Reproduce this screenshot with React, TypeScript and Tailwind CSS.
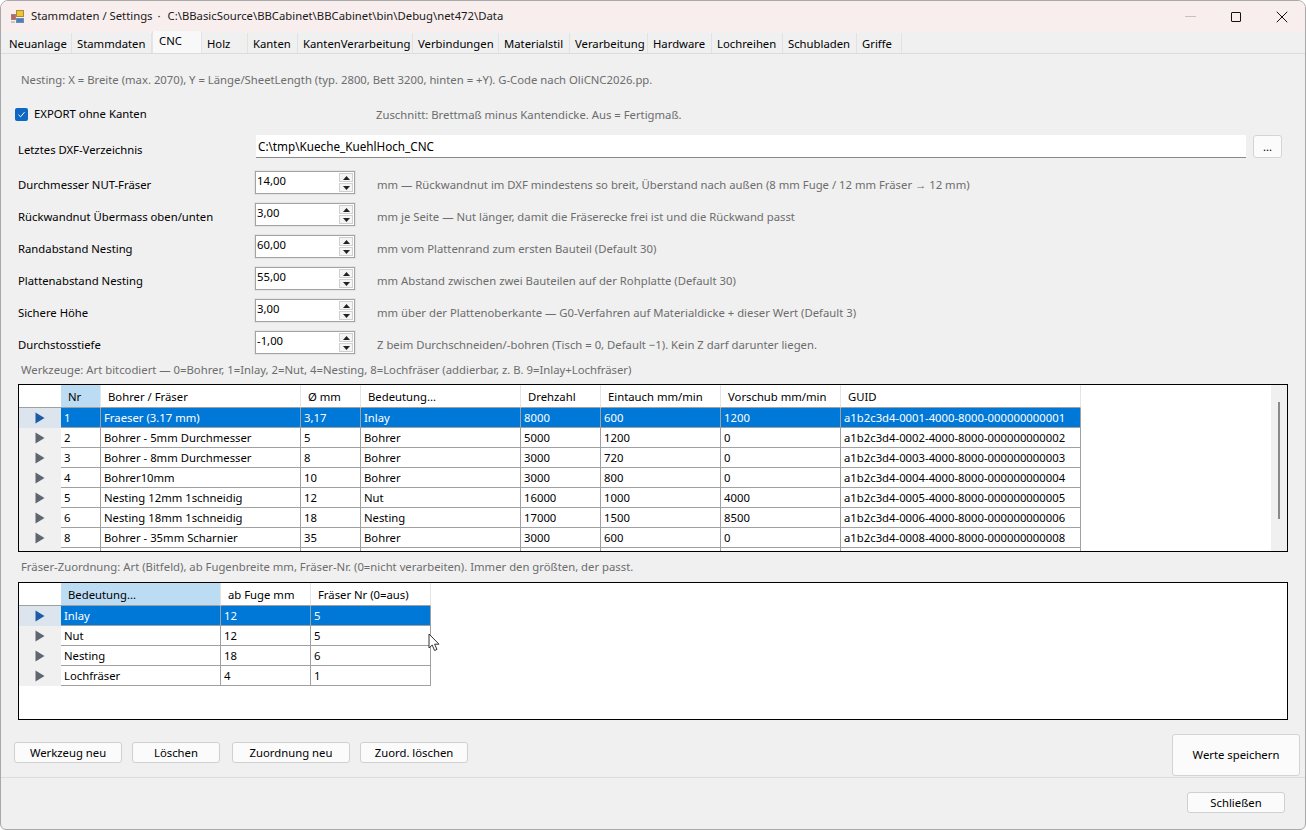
import { X } from "lucide-react";

const tabs = [
  { label: "Neuanlage", width: "w-[68px]" },
  { label: "Stammdaten", width: "w-[80px]" },
  { label: "CNC", width: "w-[50px]", active: true },
  { label: "Holz", width: "w-[46px]" },
  { label: "Kanten", width: "w-[50px]" },
  { label: "KantenVerarbeitung", width: "w-[115px]" },
  { label: "Verbindungen", width: "w-[86px]" },
  { label: "Materialstil", width: "w-[71px]" },
  { label: "Verarbeitung", width: "w-[78px]" },
  { label: "Hardware", width: "w-[64px]" },
  { label: "Lochreihen", width: "w-[71px]" },
  { label: "Schubladen", width: "w-[74px]" },
  { label: "Griffe", width: "w-[45px]" },
];

const spinners = [
  { label: "Durchmesser NUT-Fräser", value: "14,00", hint: "mm — Rückwandnut im DXF mindestens so breit, Überstand nach außen (8 mm Fuge / 12 mm Fräser → 12 mm)" },
  { label: "Rückwandnut Übermass oben/unten", value: "3,00", hint: "mm je Seite — Nut länger, damit die Fräserecke frei ist und die Rückwand passt" },
  { label: "Randabstand Nesting", value: "60,00", hint: "mm vom Plattenrand zum ersten Bauteil (Default 30)" },
  { label: "Plattenabstand Nesting", value: "55,00", hint: "mm Abstand zwischen zwei Bauteilen auf der Rohplatte (Default 30)" },
  { label: "Sichere Höhe", value: "3,00", hint: "mm über der Plattenoberkante — G0-Verfahren auf Materialdicke + dieser Wert (Default 3)" },
  { label: "Durchstosstiefe", value: "-1,00", hint: "Z beim Durchschneiden/-bohren (Tisch = 0, Default −1). Kein Z darf darunter liegen." },
];

const toolCols = ["w-[40px]", "w-[200px]", "w-[60px]", "w-[160px]", "w-[80px]", "w-[120px]", "w-[120px]", "w-[240px]"];
const toolHead = ["Nr", "Bohrer / Fräser", "Ø mm", "Bedeutung...", "Drehzahl", "Eintauch mm/min", "Vorschub mm/min", "GUID"];
const toolRows = [
  ["1", "Fraeser (3.17 mm)", "3,17", "Inlay", "8000", "600", "1200", "a1b2c3d4-0001-4000-8000-000000000001"],
  ["2", "Bohrer - 5mm Durchmesser", "5", "Bohrer", "5000", "1200", "0", "a1b2c3d4-0002-4000-8000-000000000002"],
  ["3", "Bohrer - 8mm Durchmesser", "8", "Bohrer", "3000", "720", "0", "a1b2c3d4-0003-4000-8000-000000000003"],
  ["4", "Bohrer10mm", "10", "Bohrer", "3000", "800", "0", "a1b2c3d4-0004-4000-8000-000000000004"],
  ["5", "Nesting 12mm 1schneidig", "12", "Nut", "16000", "1000", "4000", "a1b2c3d4-0005-4000-8000-000000000005"],
  ["6", "Nesting 18mm 1schneidig", "18", "Nesting", "17000", "1500", "8500", "a1b2c3d4-0006-4000-8000-000000000006"],
  ["8", "Bohrer - 35mm Scharnier", "35", "Bohrer", "3000", "600", "0", "a1b2c3d4-0008-4000-8000-000000000008"],
];

const mapCols = ["w-[160px]", "w-[90px]", "w-[120px]"];
const mapHead = ["Bedeutung...", "ab Fuge mm", "Fräser Nr (0=aus)"];
const mapRows = [
  ["Inlay", "12", "5"],
  ["Nut", "12", "5"],
  ["Nesting", "18", "6"],
  ["Lochfräser", "4", "1"],
];

function AppIcon() {
  return (
    <svg width="16" height="16" viewBox="0 0 16 16" className="shrink-0">
      <rect x="6.5" y="1.5" width="7" height="6" fill="#f2c230" stroke="#a88a3a" />
      <rect x="1.5" y="5.5" width="4" height="5" fill="#d8584a" stroke="#8a8a8a" />
      <rect x="6.5" y="9.5" width="7" height="4" fill="#3f7fd0" stroke="#7a8aa0" />
      <rect x="1" y="12" width="4" height="2" fill="#c8c8c8" />
    </svg>
  );
}

function RowArrow({ selected }: { selected?: boolean }) {
  return (
    <svg width="10" height="12" viewBox="0 0 10 12">
      <path d="M0.5 0.5 L9.5 6 L0.5 11.5 Z" fill={selected ? "#1c5aa6" : "#5f6670"} />
    </svg>
  );
}

function SpinArrow({ down }: { down?: boolean }) {
  return (
    <svg width="7" height="4" viewBox="0 0 7 4">
      <path d={down ? "M0 0 L7 0 L3.5 4 Z" : "M0 4 L7 4 L3.5 0 Z"} fill="#222" />
    </svg>
  );
}

function Spinner({ label, value, hint }: { label: string; value: string; hint: string }) {
  return (
    <div className="flex h-[23px] mb-[9px] items-center">
      <div className="w-[237px] pt-[4px] text-black">{label}</div>
      <div className="flex h-[23px] w-[100px] border border-[#a3a3a3] bg-white outline outline-[#e4e4e4]">
        <div className="flex-1 pl-[1px] leading-[15px] pt-[1px] text-black">{value}</div>
        <div className="flex w-[16px] flex-col gap-[1px] p-[1px]">
          <div className="flex flex-1 items-center justify-center border border-[#d0d0d0] bg-[#f4f4f4]"><SpinArrow /></div>
          <div className="flex flex-1 items-center justify-center border border-[#d0d0d0] bg-[#f4f4f4]"><SpinArrow down /></div>
        </div>
      </div>
      <div className="ml-[22px] pt-[4px] text-[#6d6d6d]">{hint}</div>
    </div>
  );
}

function DataGrid({ cols, head, rows, partial }: { cols: string[]; head: string[]; rows: string[][]; partial?: boolean }) {
  return (
    <div className="flex flex-col">
      <div className="flex h-[23px]">
        <div className="w-[42px] shrink-0 border-b border-[#a0a0a0] bg-white" />
        {head.map((h, i) => (
          <div
            key={h}
            className={`${cols[i]} shrink-0 pl-[7px] pt-[4px] border-r border-b border-b-[#a0a0a0] border-r-[#e4e4e4] ${i === 0 ? "bg-[#bcdcf4]" : "bg-white"}`}
          >
            {h}
          </div>
        ))}
      </div>
      {rows.map((row, r) => (
        <div key={r} className="flex h-[20px]">
          <div className={`flex w-[42px] shrink-0 items-center justify-center ${r === 0 ? "bg-[#dce4ee]" : "bg-[#f0f0f0]"}`}>
            <RowArrow selected={r === 0} />
          </div>
          {row.map((c, i) => (
            <div
              key={i}
              className={`${cols[i]} shrink-0 whitespace-nowrap overflow-hidden pl-[3px] leading-[19px] border-b border-r border-[#a0a0a0] ${r === 0 ? "bg-[#0078d7] text-white" : "bg-white text-black"}`}
            >
              {c}
            </div>
          ))}
        </div>
      ))}
      {partial && (
        <div className="flex h-[3px]">
          <div className="w-[42px] shrink-0 bg-[#f0f0f0]" />
          {cols.map((c, i) => (
            <div key={i} className={`${c} shrink-0 border-r border-[#a0a0a0] bg-white`} />
          ))}
        </div>
      )}
    </div>
  );
}

function PushButton({ label, className }: { label: string; className: string }) {
  return (
    <button className={`${className} h-[21px] rounded-[3px] border border-[#d0d0d0] bg-[#fbfbfb] text-black`}>
      {label}
    </button>
  );
}

export default function App() {
  return (
    <div className="relative flex h-[830px] w-[1306px] flex-col overflow-hidden rounded-t-[8px] rounded-b-[6px] border border-[#a8a8a8] bg-[#f0f0f0] font-['Noto_Sans','Open_Sans',sans-serif] text-[11.3px] leading-[16px] text-black">
      {/* title bar */}
      <div className="flex h-[31px] shrink-0 items-center bg-[#f9eeee] pl-[9px]">
        <AppIcon />
        <span className="ml-[5px] pb-[1px] text-[#1a1a1a]">Stammdaten / Settings</span>
        <span className="ml-[5px] pb-[1px] text-[#1a1a1a]">·</span>
        <span className="ml-[7px] pb-[1px] text-[#1a1a1a]">C:\BBasicSource\BBCabinet\BBCabinet\bin\Debug\net472\Data</span>
        <div className="ml-auto flex items-center">
          <div className="mr-[35px] h-px w-[11px] bg-[#c8c0c0]" />
          <div className="mr-[31px] h-[10px] w-[10px] rounded-[1px] border border-[#111]" />
          <X size={20} strokeWidth={1.2} className="mr-[13px] text-[#111]" />
        </div>
      </div>

      {/* tabs */}
      <div className="flex h-[22px] shrink-0 items-end border-b border-[#dcdcdc] pl-[3px]">
        {tabs.map((t) =>
          t.active ? (
            <div key={t.label} className={`${t.width} h-[22px] border-x border-[#e4e4e4] bg-[#f8f8f8] pl-[6px] pt-[2px]`}>{t.label}</div>
          ) : (
            <div key={t.label} className={`${t.width} h-[20px] border-r border-[#e2e2e2] pl-[5px] pt-[3px]`}>{t.label}</div>
          ),
        )}
      </div>

      {/* tab page */}
      <div className="flex h-[724px] shrink-0 flex-col border-b border-[#dcdcdc] pl-[17px] pr-[17px]">
        <div className="pl-[3px] pt-[18px] text-[#6d6d6d]">Nesting: X = Breite (max. 2070), Y = Länge/SheetLength (typ. 2800, Bett 3200, hinten = +Y). G-Code nach OliCNC2026.pp.</div>

        <div className="mt-[17px] flex h-[18px] items-center">
          <div className="flex w-[358px] items-center">
            <div className="-ml-[3px] flex h-[13px] w-[13px] items-center justify-center rounded-[2px] bg-[#0f68c4]">
              <svg width="9" height="9" viewBox="0 0 9 9"><path d="M1.5 4.8 L3.6 6.8 L7.5 2.2" stroke="#fff" strokeWidth="1" fill="none" /></svg>
            </div>
            <span className="ml-[6px]">EXPORT ohne Kanten</span>
          </div>
          <span className="pt-[2px] text-[#6d6d6d]">Zuschnitt: Brettmaß minus Kantendicke. Aus = Fertigmaß.</span>
        </div>

        <div className="mt-[12px] flex h-[23px] items-center">
          <div className="w-[238px] pt-[7px]">Letztes DXF-Verzeichnis</div>
          <div className="flex h-[23px] w-[990px] items-center border-b border-[#8a8a8a] bg-white pl-[2px] text-[11.7px]">C:\tmp\Kueche_KuehlHoch_CNC</div>
          <button className="ml-[7px] h-[23px] w-[29px] rounded-[3px] border border-[#d4d4d4] bg-[#fbfbfb] leading-[16px]">...</button>
        </div>

        <div className="mt-[13px]">
          {spinners.map((s) => (
            <Spinner key={s.label} label={s.label} value={s.value} hint={s.hint} />
          ))}
        </div>

        <div className="mt-[-1px] pl-[3px] text-[#6d6d6d]">Werkzeuge: Art bitcodiert — 0=Bohrer, 1=Inlay, 2=Nut, 4=Nesting, 8=Lochfräser (addierbar, z. B. 9=Inlay+Lochfräser)</div>

        <div className="mt-[6px] flex h-[168px] w-[1270px] overflow-hidden border border-black bg-white">
          <DataGrid cols={toolCols} head={toolHead} rows={toolRows} partial />
          <div className="ml-auto flex w-[16px] justify-center bg-[#f0f0f0] pt-[17px]">
            <div className="h-[117px] w-[2px] bg-[#8a8a8a]" />
          </div>
        </div>

        <div className="mt-[7px] pl-[3px] text-[#6d6d6d]">Fräser-Zuordnung: Art (Bitfeld), ab Fugenbreite mm, Fräser-Nr. (0=nicht verarbeiten). Immer den größten, der passt.</div>

        <div className="mt-[7px] h-[138px] w-[1270px] border border-black bg-white">
          <DataGrid cols={mapCols} head={mapHead} rows={mapRows} />
        </div>

        <div className="flex flex-1 items-start">
          <div className="mt-[22px] -ml-[4px] flex gap-[10px]">
            <PushButton label="Werkzeug neu" className="w-[108px]" />
            <PushButton label="Löschen" className="w-[88px]" />
            <PushButton label="Zuordnung neu" className="ml-[2px] w-[118px]" />
            <PushButton label="Zuord. löschen" className="w-[108px]" />
          </div>
          <button className="ml-auto mr-[-12px] mt-[14px] h-[42px] w-[128px] rounded-[3px] border border-[#d4d4d4] bg-[#fbfbfb] text-black">Werte speichern</button>
        </div>
      </div>

      {/* footer */}
      <div className="flex flex-1 items-start justify-end pr-[20px] pt-[14px]">
        <button className="h-[21px] w-[98px] rounded-[3px] border border-[#d0d0d0] bg-[#fbfbfb] pt-[1px]">Schließen</button>
      </div>

      {/* mouse cursor */}
      <svg width="14" height="20" viewBox="0 0 14 20" className="absolute left-[427px] top-[632px]">
        <path d="M1 1 L1 15 L4.2 12 L6.6 17.5 L9 16.4 L6.6 11.2 L11 11.2 Z" fill="#fff" stroke="#333" strokeWidth="1" />
      </svg>
    </div>
  );
}
